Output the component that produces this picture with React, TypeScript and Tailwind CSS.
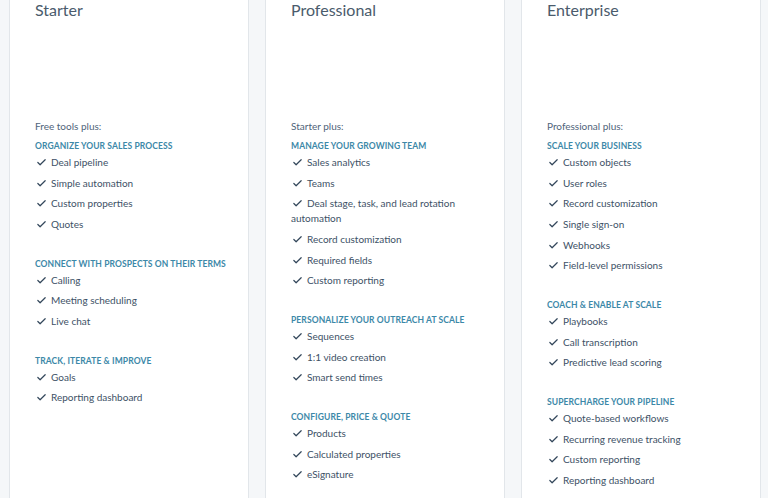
import { Check } from "lucide-react"

type Section = { title: string; items: string[] }

const plans: { name: string; intro: string; sections: Section[] }[] = [
  {
    name: "Starter",
    intro: "Free tools plus:",
    sections: [
      {
        title: "Organize your sales process",
        items: ["Deal pipeline", "Simple automation", "Custom properties", "Quotes"],
      },
      {
        title: "Connect with prospects on their terms",
        items: ["Calling", "Meeting scheduling", "Live chat"],
      },
      {
        title: "Track, iterate & improve",
        items: ["Goals", "Reporting dashboard"],
      },
    ],
  },
  {
    name: "Professional",
    intro: "Starter plus:",
    sections: [
      {
        title: "Manage your growing team",
        items: [
          "Sales analytics",
          "Teams",
          "Deal stage, task, and lead rotation automation",
          "Record customization",
          "Required fields",
          "Custom reporting",
        ],
      },
      {
        title: "Personalize your outreach at scale",
        items: ["Sequences", "1:1 video creation", "Smart send times"],
      },
      {
        title: "Configure, price & quote",
        items: ["Products", "Calculated properties", "eSignature"],
      },
    ],
  },
  {
    name: "Enterprise",
    intro: "Professional plus:",
    sections: [
      {
        title: "Scale your business",
        items: [
          "Custom objects",
          "User roles",
          "Record customization",
          "Single sign-on",
          "Webhooks",
          "Field-level permissions",
        ],
      },
      {
        title: "Coach & enable at scale",
        items: ["Playbooks", "Call transcription", "Predictive lead scoring"],
      },
      {
        title: "Supercharge your pipeline",
        items: [
          "Quote-based workflows",
          "Recurring revenue tracking",
          "Custom reporting",
          "Reporting dashboard",
        ],
      },
    ],
  },
]

function PlanCard({ plan }: { plan: (typeof plans)[number] }) {
  return (
    <div className="w-[240px] shrink-0 border border-[#e2e6ea] bg-white pl-[25px] pr-4 pt-[16px]">
      <h3 className="text-[16px] leading-[22px] text-[#4a5b6c]">{plan.name}</h3>
      <div className="h-[98px]" />
      <p className="text-[10px] leading-[15px] text-[#4f647a]">{plan.intro}</p>
      {plan.sections.map((s) => (
        <div key={s.title} className="mt-[5px] mb-[19px]">
          <h4 className="text-[8.5px] font-bold uppercase leading-[15px] tracking-[0.1px] text-[#3c88a8]">
            {s.title}
          </h4>
          <ul className="mt-[1px]">
            {s.items.map((item) => (
              <li key={item} className="pb-[5.67px] text-[10px] leading-[15px] text-[#3d5166]">
                <Check className="mr-[4px] ml-[1px] inline-block h-[11px] w-[11px] -translate-y-[1px] text-[#33475b]" strokeWidth={2.6} />
                {item}
              </li>
            ))}
          </ul>
        </div>
      ))}
    </div>
  )
}

export default function App() {
  return (
    <div className="h-[498px] w-[768px] overflow-hidden bg-[#f5f7f9] font-['Lato',sans-serif]">
      <div className="-mt-[18px] flex gap-4 pl-[9px]">
        {plans.map((p) => (
          <PlanCard key={p.name} plan={p} />
        ))}
      </div>
    </div>
  )
}
